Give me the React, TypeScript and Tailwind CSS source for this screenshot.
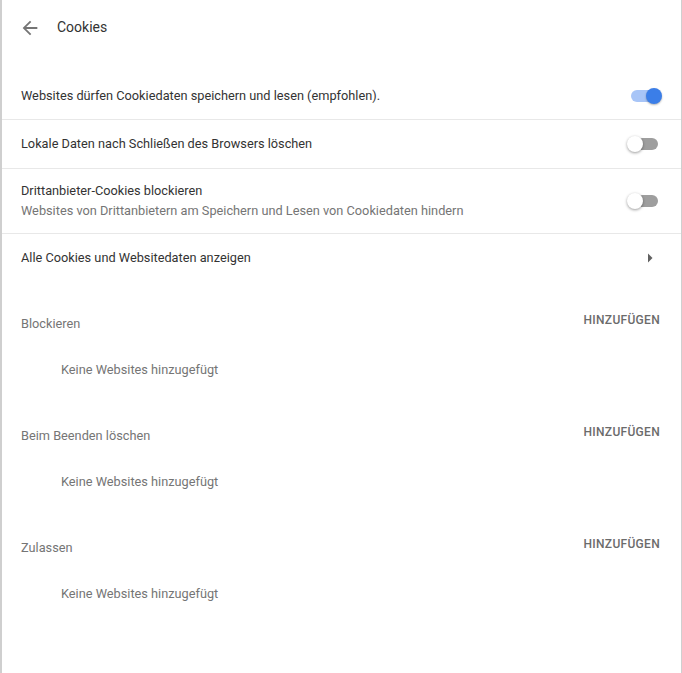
import React from "react";

const Toggle = ({ on }: { on: boolean }) => {
  return (
    <div className="relative flex h-4 w-[34px] items-center">
      <div className={on ? "ml-[3px] h-3 w-[28px] rounded-full bg-[#a8c5f7]" : "ml-[3px] h-3 w-[28px] rounded-full bg-[#9e9e9e]"}></div>
      <div
        className={
          on
            ? "absolute right-0 top-0 h-4 w-4 rounded-full bg-[#3b7ee8] shadow-[0_1px_2px_rgba(0,0,0,0.3)]"
            : "absolute left-0 top-0 h-4 w-4 rounded-full bg-white shadow-[0_1px_3px_rgba(0,0,0,0.4)]"
        }
      ></div>
    </div>
  );
};

const Section = ({ title }: { title: string }) => {
  return (
    <div className="pt-[32px]">
      <div className="flex items-start justify-between pl-[19px] pr-[21px]">
        <span className="text-[12.75px] leading-5 text-[#757575]">{title}</span>
        <button className="-mt-[4px] text-[12px] font-medium leading-5 tracking-[0.3px] text-[#6b6b6b]">HINZUFÜGEN</button>
      </div>
      <div className="mt-[26px] pb-[14px] pl-[59px] text-[12.75px] leading-5 text-[#757575]">Keine Websites hinzugefügt</div>
    </div>
  );
};

export default function App() {
  return (
    <div className="h-[673px] w-[682px] border-l-2 border-r border-[#cfcfcf] bg-white font-['Roboto','Liberation_Sans',sans-serif] text-[#333333]">
      <div className="flex h-[55px] items-center pl-[17px]">
        <svg width="22" height="22" viewBox="0 0 24 24" className="text-[#757575]">
          <path fill="currentColor" d="M20 11H7.83l5.59-5.59L12 4l-8 8 8 8 1.41-1.41L7.83 13H20v-2z" />
        </svg>
        <span className="ml-[16px] text-[14px] text-[#333333]">Cookies</span>
      </div>
      <div className="mt-[17px]">
        <div className="flex h-12 items-center justify-between border-b border-[#e8e8e8] pl-[19px] pr-[19px]">
          <span className="text-[12.75px]">Websites dürfen Cookiedaten speichern und lesen (empfohlen).</span>
          <Toggle on={true} />
        </div>
        <div className="flex h-[49px] items-center justify-between border-b border-[#e8e8e8] pl-[19px] pr-[20px]">
          <span className="text-[12.75px]">Lokale Daten nach Schließen des Browsers löschen</span>
          <Toggle on={false} />
        </div>
        <div className="flex h-[65px] items-center justify-between border-b border-[#e8e8e8] pl-[19px] pr-[20px]">
          <div className="flex flex-col">
            <span className="text-[12.75px] leading-5">Drittanbieter-Cookies blockieren</span>
            <span className="text-[12.75px] leading-5 text-[#757575]">Websites von Drittanbietern am Speichern und Lesen von Cookiedaten hindern</span>
          </div>
          <Toggle on={false} />
        </div>
        <div className="flex h-12 items-center justify-between pl-[19px] pr-[28px]">
          <span className="text-[12.75px]">Alle Cookies und Websitedaten anzeigen</span>
          <svg width="6" height="10" viewBox="0 0 6 10">
            <path fill="#616161" d="M1 0.5 L5.5 5 L1 9.5 Z" />
          </svg>
        </div>
      </div>
      <Section title="Blockieren" />
      <Section title="Beim Beenden löschen" />
      <Section title="Zulassen" />
    </div>
  );
}
